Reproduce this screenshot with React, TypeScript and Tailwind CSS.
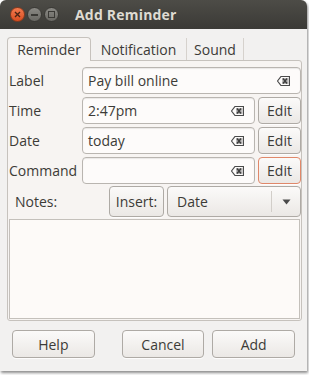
import React from "react";

const font = { fontFamily: '"Open Sans", "DejaVu Sans", sans-serif' };

function ClearIcon() {
  return (
    <svg width="13" height="10" viewBox="0 0 13 10" className="shrink-0">
      <path d="M4 0.5 H12.5 V9.5 H4 L0.5 5 Z" fill="none" stroke="#4a4a4a" strokeWidth="1.2" />
      <path d="M6 2.5 L10 7.5 M10 2.5 L6 7.5" stroke="#3a3a3a" strokeWidth="1.6" />
      <rect x="5" y="2" width="6.5" height="6" fill="#4a4a4a" opacity="0.35" />
    </svg>
  );
}

function Entry({ value, className = "" }: { value: string; className?: string }) {
  return (
    <div
      className={`h-[27px] flex items-center justify-between pl-[5px] pr-[10px] rounded-[4px] border border-[#b9b5b0] bg-[#fdfbfa] shadow-[inset_0_1px_1px_rgba(0,0,0,0.08)] text-[14px] text-[#3c3b37] ${className}`}
    >
      <span>{value}</span>
      <ClearIcon />
    </div>
  );
}

function Button({ label, className = "", focus = false }: { label: string; className?: string; focus?: boolean }) {
  return (
    <div
      className={`flex items-center justify-center rounded-[4px] border bg-gradient-to-b from-[#fbfaf9] to-[#ebe8e5] text-[14px] text-[#3c3b37] shadow-[0_1px_0_rgba(255,255,255,0.8)] ${
        focus ? "border-[#e0886a]" : "border-[#aeaaa5]"
      } ${className}`}
    >
      {label}
    </div>
  );
}

export default function App() {
  return (
    <div className="w-[309px] h-[375px] bg-white" style={font}>
      <div className="w-[307px] h-[371px] rounded-t-[6px] bg-[#f2f1f0] shadow-[1px_2px_3px_rgba(0,0,0,0.45)] flex flex-col overflow-hidden">
        {/* Title bar */}
        <div className="h-[29px] bg-gradient-to-b from-[#4d4c47] to-[#3b3a36] flex items-center pl-[10px] shrink-0">
          <div className="w-[15px] h-[15px] rounded-full bg-gradient-to-b from-[#f37a4e] to-[#d84d1f] border border-[#8a3a1c] flex items-center justify-center">
            <svg width="7" height="7" viewBox="0 0 7 7">
              <path d="M1 1 L6 6 M6 1 L1 6" stroke="#4a2414" strokeWidth="1.4" />
            </svg>
          </div>
          <div className="ml-[2px] w-[15px] h-[15px] rounded-full bg-gradient-to-b from-[#8a8984] to-[#696863] border border-[#3a3935] flex items-center justify-center">
            <div className="w-[7px] h-[2px] bg-[#3a3935]" />
          </div>
          <div className="ml-[2px] w-[15px] h-[15px] rounded-full bg-gradient-to-b from-[#8a8984] to-[#696863] border border-[#3a3935] flex items-center justify-center">
            <div className="w-[7px] h-[7px] border-[1.5px] border-[#3a3935]" />
          </div>
          <span className="ml-[16px] text-[14px] font-bold text-[#dfdbd2] tracking-[0.2px]">Add Reminder</span>
        </div>

        {/* Notebook */}
        <div className="px-[7px] pt-[7px]">
          <div className="flex items-end h-[24px] text-[14px] text-[#3c3b37]">
            <div className="h-[24px] w-[84px] flex items-center justify-center rounded-t-[4px] border border-b-0 border-[#c6c2bd] bg-[#f7f4f2] relative z-10 -mb-px">
              Reminder
            </div>
            <div className="h-[22px] w-[96px] flex items-center justify-center border-r border-[#d6d2cd]">Notification</div>
            <div className="h-[22px] w-[57px] flex items-center justify-center border-r border-[#d6d2cd]">Sound</div>
          </div>
          <div className="w-[295px] h-[261px] border border-[#c6c2bd] rounded-b-[3px] rounded-tr-[3px] bg-[#f7f4f2] flex flex-col pl-[1px] pt-[6px] pb-[1px]">
            <div className="flex flex-col gap-[3px] text-[14px] text-[#3c3b37]">
              <div className="flex items-center">
                <span className="w-[73px]">Label</span>
                <Entry value="Pay bill online" className="flex-1" />
              </div>
              <div className="flex items-center">
                <span className="w-[73px]">Time</span>
                <Entry value="2:47pm" className="flex-1" />
                <Button label="Edit" className="ml-[3px] w-[43px] h-[27px]" />
              </div>
              <div className="flex items-center">
                <span className="w-[73px]">Date</span>
                <Entry value="today" className="flex-1" />
                <Button label="Edit" className="ml-[3px] w-[43px] h-[27px]" />
              </div>
              <div className="flex items-center">
                <span className="w-[73px]">Command</span>
                <Entry value="" className="flex-1" />
                <Button label="Edit" focus className="ml-[3px] w-[43px] h-[27px]" />
              </div>
              <div className="flex items-center -mt-[1px]">
                <span className="w-[100px] pl-[6px]">Notes:</span>
                <Button label="Insert:" className="w-[55px] h-[31px]" />
                <div className="ml-[3px] flex-1 h-[31px] flex items-center rounded-[4px] border border-[#aeaaa5] bg-gradient-to-b from-[#fbfaf9] to-[#ebe8e5]">
                  <span className="flex-1 pl-[9px]">Date</span>
                  <div className="w-px h-[21px] bg-[#d2cec9]" />
                  <div className="w-[28px] flex justify-center">
                    <svg width="9" height="6" viewBox="0 0 9 6">
                      <path d="M0.5 0.5 H8.5 L4.5 5.5 Z" fill="#4a4a4a" />
                    </svg>
                  </div>
                </div>
              </div>
            </div>
            <div className="mt-[2px] flex-1 border border-[#c4c0bb] bg-[#fdfaf8] mr-[1px]" />
          </div>
        </div>

        {/* Buttons */}
        <div className="flex items-center px-[12px] mt-[9px]">
          <Button label="Help" className="w-[83px] h-[28px]" />
          <Button label="Cancel" className="ml-[27px] w-[83px] h-[28px]" />
          <Button label="Add" className="ml-[8px] w-[83px] h-[28px]" />
        </div>
      </div>
    </div>
  );
}
